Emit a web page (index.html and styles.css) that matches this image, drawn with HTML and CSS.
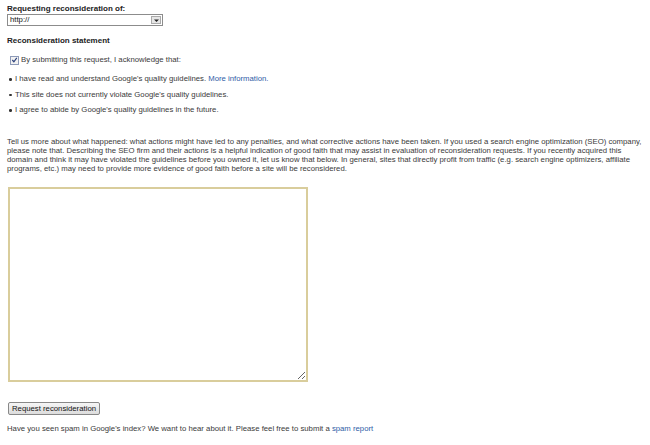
FILE: index.html
```html
<!DOCTYPE html>
<html lang="en">
<head>
    <meta charset="UTF-8">
    <title>Request reconsideration</title>
    <link rel="stylesheet" href="styles.css">
</head>
<body>
    <form class="recon-form">
        <h3 class="field-title">Requesting reconsideration of:</h3>
        <div class="site-select">
            <span class="site-value">http://</span>
            <span class="site-arrow">
                <svg width="7" height="7" viewBox="0 0 7 7"><path d="M1 2.5h5L3.5 5z" fill="#222"/></svg>
            </span>
        </div>

        <h3 class="section-title">Reconsideration statement</h3>
        <label class="ack">
            <span class="check">
                <svg width="8" height="8" viewBox="0 0 8 8"><path d="M1.5 4l1.8 2L6.6 1.6" fill="none" stroke="#2a3f7a" stroke-width="1.3"/></svg>
            </span>
            By submitting this request, I acknowledge that:
        </label>
        <ul class="ack-list">
            <li>I have read and understand Google's quality guidelines. <a href="#">More information.</a></li>
            <li>This site does not currently violate Google's quality guidelines.</li>
            <li>I agree to abide by Google's quality guidelines in the future.</li>
        </ul>

        <p class="intro">Tell us more about what happened: what actions might have led to any penalties, and what corrective actions have been taken. If you used a search engine optimization (SEO) company, please note that. Describing the SEO firm and their actions is a helpful indication of good faith that may assist in evaluation of reconsideration requests. If you recently acquired this domain and think it may have violated the guidelines before you owned it, let us know that below. In general, sites that directly profit from traffic (e.g. search engine optimizers, affiliate programs, etc.) may need to provide more evidence of good faith before a site will be reconsidered.</p>

        <textarea class="statement"></textarea>

        <div class="actions">
            <button type="button" class="submit-btn">Request reconsideration</button>
        </div>

        <p class="spam">Have you seen spam in Google's index? We want to hear about it. Please feel free to submit a <a href="#">spam report</a></p>
    </form>
</body>
</html>
```

FILE: styles.css
```css
body {
    margin: 0;
    background: #fff;
    color: #3a3a3a;
    font-family: "Liberation Sans", Arial, sans-serif;
    font-size: 7.75px;
}

a {
    color: #2f5da6;
    text-decoration: none;
}

.recon-form {
    padding: 4px 7px;
}

.field-title,
.section-title {
    margin: 0;
    font-size: 8px;
    font-weight: bold;
    color: #222;
    line-height: 10px;
}

.site-select {
    display: flex;
    width: 154px;
    height: 10px;
    border: 1px solid #8c8c8c;
    background: #fff;
}

.site-value {
    flex: 1;
    padding-left: 2px;
    line-height: 10px;
    color: #111;
}

.site-arrow {
    display: flex;
    align-items: center;
    justify-content: center;
    width: 10px;
    margin: 1px;
    border: 1px solid #aaa;
    background: #e6e6e6;
    box-sizing: border-box;
}

.section-title {
    margin-top: 10px;
}

.ack {
    display: flex;
    align-items: center;
    gap: 2px;
    margin-top: 9px;
    margin-left: 3px;
    line-height: 10px;
}

.check {
    display: flex;
    align-items: center;
    justify-content: center;
    width: 7px;
    height: 7px;
    border: 1px solid #8d9ab8;
    background: #f2f2f2;
}

.ack-list {
    margin: 9px 0 0;
    padding: 0 0 0 8px;
    list-style: none;
}

.ack-list li {
    position: relative;
    line-height: 10px;
    margin-bottom: 5.5px;
}

.ack-list li::before {
    content: "";
    position: absolute;
    left: -6px;
    top: 4px;
    width: 2.5px;
    height: 2.5px;
    border-radius: 50%;
    background: #333;
}

.intro {
    margin: 22px 0 0;
    line-height: 9px;
}

.statement {
    display: block;
    width: 300px;
    height: 195px;
    margin: 14px 0 0 1px;
    border: 2px solid #d9cd9c;
    box-sizing: border-box;
    resize: both;
}

.actions {
    margin-top: 20px;
}

.submit-btn {
    font-family: "Liberation Sans", Arial, sans-serif;
    font-size: 7.75px;
    color: #111;
    height: 13px;
    padding: 0 3px;
    margin-left: 1px;
    line-height: 11px;
    border: 1px solid #888;
    border-radius: 2px;
    background: linear-gradient(#f6f6f6, #dcdcdc);
}

.spam {
    margin: 9px 0 0;
    line-height: 10px;
}
```
